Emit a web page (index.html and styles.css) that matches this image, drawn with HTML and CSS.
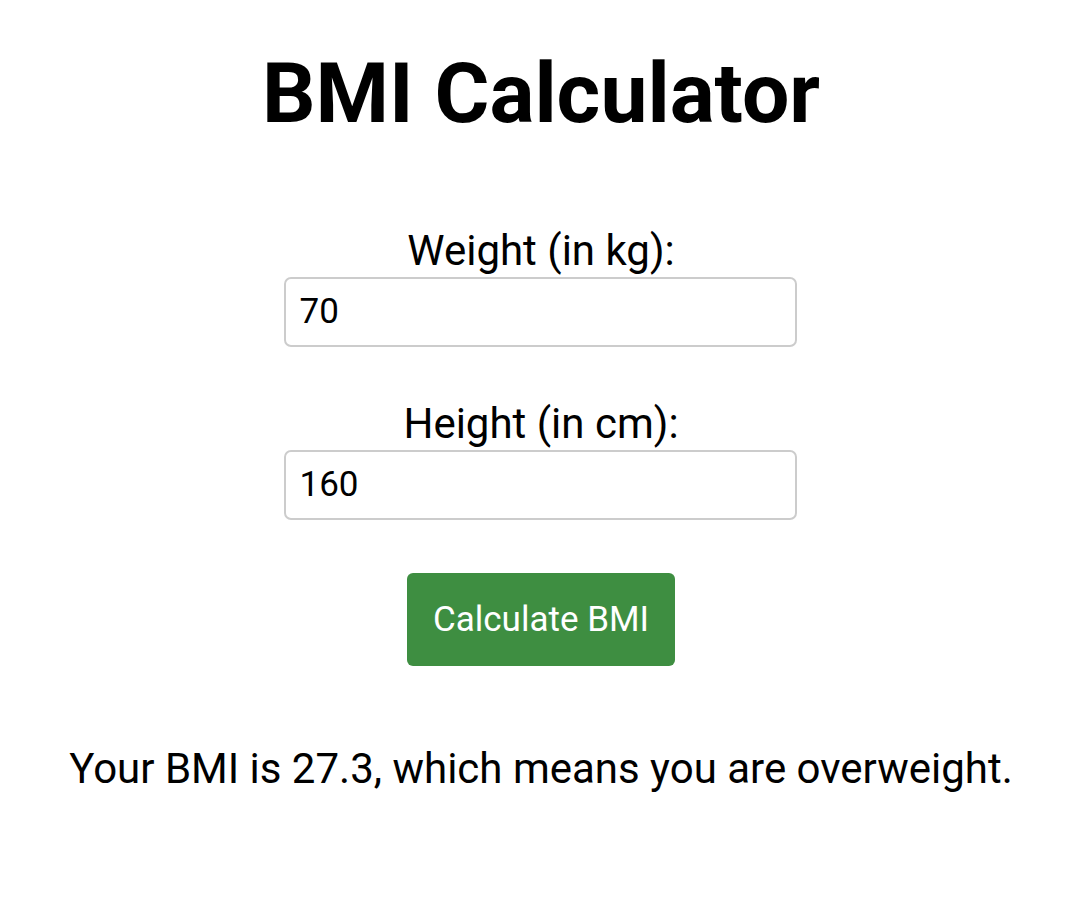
FILE: index.html
```html
<!DOCTYPE html>
<html lang="en">
<head>
<meta charset="utf-8">
<title>BMI Calculator</title>
<link rel="stylesheet" href="styles.css">
</head>
<body>
<main class="app">
  <h1 class="title">BMI Calculator</h1>
  <form class="form">
    <div class="field">
      <label class="label" for="weight">Weight (in kg):</label>
      <input class="input" id="weight" type="text" value="70">
    </div>
    <div class="field">
      <label class="label" for="height">Height (in cm):</label>
      <input class="input" id="height" type="text" value="160">
    </div>
    <button class="button" type="button">Calculate BMI</button>
  </form>
  <p class="result">Your BMI is 27.3, which means you are overweight.</p>
</main>
</body>
</html>
```

FILE: styles.css
```css
html, body {
  margin: 0;
  padding: 0;
  background: #ffffff;
}

body {
  font-family: Roboto, "Noto Sans", Arial, sans-serif;
  color: #000000;
}

.app {
  display: flex;
  flex-direction: column;
  align-items: center;
  padding-top: 44px;
}

.title {
  margin: 0;
  font-size: 84px;
  font-weight: 700;
  line-height: 100px;
  padding-left: 2px;
}

.form {
  display: flex;
  flex-direction: column;
  align-items: center;
  margin-top: 82px;
}

.field {
  display: flex;
  flex-direction: column;
  align-items: center;
  margin-bottom: 52px;
}

.field + .field {
  margin-bottom: 53px;
}

.label {
  font-size: 42px;
  line-height: 50px;
  margin-bottom: 1px;
  padding-left: 2px;
}

.input {
  box-sizing: border-box;
  width: 513px;
  height: 70px;
  padding: 0 14px 2px;
  border: 2px solid #cccccc;
  border-radius: 7px;
  font-family: Roboto, "Noto Sans", Arial, sans-serif;
  font-size: 35px;
  color: #000000;
  background: #ffffff;
}

.button {
  box-sizing: border-box;
  width: 268px;
  height: 93px;
  margin-left: 2px;
  border: none;
  border-radius: 6px;
  background: #3e8e41;
  color: #ffffff;
  font-family: Roboto, "Noto Sans", Arial, sans-serif;
  font-size: 35px;
}

.result {
  margin: 78px 0 0;
  padding-left: 2px;
  font-size: 42px;
  line-height: 50px;
}
```
